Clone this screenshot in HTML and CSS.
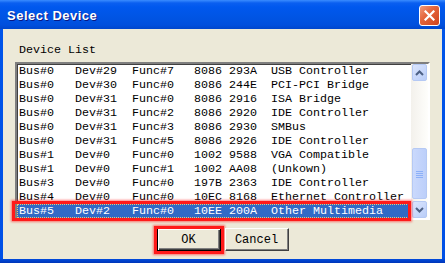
FILE: index.html
```html
<!DOCTYPE html>
<html>
<head>
    <meta charset="UTF-8">
    <title>Select Device</title>
    <link rel="stylesheet" href="styles.css">
</head>
<body>
    <div class="window">
        <div class="titlebar">
            <span class="title">Select Device</span>
            <div class="close">
                <svg width="11" height="11" viewBox="0 0 11 11"><path d="M1.5 1.5 L9.5 9.5 M9.5 1.5 L1.5 9.5" stroke="#fff" stroke-width="2.2" stroke-linecap="square"/></svg>
            </div>
        </div>
        <div class="client">
            <div class="label">Device List</div>
            <div class="list">
                <div class="rows">
                    <div class="row"><span>Bus#0</span><span>Dev#29</span><span>Func#7</span><span>8086</span><span>293A</span><span>USB Controller</span></div>
                    <div class="row"><span>Bus#0</span><span>Dev#30</span><span>Func#0</span><span>8086</span><span>244E</span><span>PCI-PCI Bridge</span></div>
                    <div class="row"><span>Bus#0</span><span>Dev#31</span><span>Func#0</span><span>8086</span><span>2916</span><span>ISA Bridge</span></div>
                    <div class="row"><span>Bus#0</span><span>Dev#31</span><span>Func#2</span><span>8086</span><span>2920</span><span>IDE Controller</span></div>
                    <div class="row"><span>Bus#0</span><span>Dev#31</span><span>Func#3</span><span>8086</span><span>2930</span><span>SMBus</span></div>
                    <div class="row"><span>Bus#0</span><span>Dev#31</span><span>Func#5</span><span>8086</span><span>2926</span><span>IDE Controller</span></div>
                    <div class="row"><span>Bus#1</span><span>Dev#0</span><span>Func#0</span><span>1002</span><span>9588</span><span>VGA Compatible</span></div>
                    <div class="row"><span>Bus#1</span><span>Dev#0</span><span>Func#1</span><span>1002</span><span>AA08</span><span>(Unkown)</span></div>
                    <div class="row"><span>Bus#3</span><span>Dev#0</span><span>Func#0</span><span>197B</span><span>2363</span><span>IDE Controller</span></div>
                    <div class="row"><span>Bus#4</span><span>Dev#0</span><span>Func#0</span><span>10EC</span><span>8168</span><span>Ethernet Controller</span></div>
                    <div class="row selected"><span>Bus#5</span><span>Dev#2</span><span>Func#0</span><span>10EE</span><span>200A</span><span>Other Multimedia</span><div class="mark mark-row"></div></div>
                </div>
                <div class="scrollbar">
                    <div class="sb-btn">
                        <svg width="9" height="6" viewBox="0 0 9 6"><path d="M1 5 L4.5 1.5 L8 5" fill="none" stroke="#4d6185" stroke-width="2"/></svg>
                    </div>
                    <div class="track">
                        <div class="thumb">
                            <svg width="8" height="8" viewBox="0 0 8 8"><path d="M0 1.5h7M0 3.5h7M0 5.5h7M0 7.5h7" stroke="#8cb0f8" stroke-width="1"/></svg>
                        </div>
                    </div>
                    <div class="sb-btn">
                        <svg width="9" height="6" viewBox="0 0 9 6"><path d="M1 1 L4.5 4.5 L8 1" fill="none" stroke="#4d6185" stroke-width="2"/></svg>
                    </div>
                </div>
            </div>
            <div class="buttons">
                <div class="btn default">OK<div class="mark mark-btn"></div></div>
                <div class="btn">Cancel</div>
            </div>
        </div>
    </div>
</body>
</html>
```
FILE: styles.css
```css
body{
    margin:0;
    background:#ece9d8;
    overflow:hidden;
}
.window{
    width:445px;
    height:263px;
    display:flex;
    flex-direction:column;
    background:linear-gradient(to bottom,#0055ea 0,#0050e6 258px,#0036b8 263px);
}
.titlebar{
    height:29px;
    display:flex;
    align-items:center;
    justify-content:space-between;
    padding:0 5px 0 7px;
    background:linear-gradient(to bottom,#3a8cff 0,#0a5ff0 3px,#0058ee 7px,#0054e3 18px,#004fdd 25px,#0046cc 29px);
}
.title{
    font-family:"Liberation Sans",Arial,sans-serif;
    font-weight:bold;
    font-size:13px;
    letter-spacing:0.5px;
    color:#fff;
    text-shadow:1px 1px #0a1883;
    padding-top:2px;
}
.close{
    width:19px;
    height:19px;
    border:1px solid #fff;
    border-radius:3px;
    background:linear-gradient(135deg,#f09a7c 0,#e5663d 40%,#d0431c 100%);
    display:flex;
    align-items:center;
    justify-content:center;
    margin-top:1px;
}
.client{
    flex:1;
    margin:0 3px 4px;
    background:#ece9d8;
    display:flex;
    flex-direction:column;
    padding-top:14px;
    font-family:"Liberation Mono","Courier New",monospace;
    font-size:11.67px;
    color:#000;
}
.label{
    line-height:14px;
    margin-left:16px;
}
.list{
    position:relative;
    margin:5px 0 0 12px;
    width:411px;
    height:154px;
    display:flex;
    border-style:solid;
    border-width:2px;
    border-color:#7f7f7f #fff #fff #7f7f7f;
    box-shadow:inset 1px 1px #404040;
    background:#fff;
}
.rows{
    flex:1;
}
.row{
    position:relative;
    display:grid;
    grid-template-columns:56px 57px 62px 35px 42px auto;
    height:14px;
    line-height:14px;
    padding-left:2px;
    white-space:pre;
}
.row.selected{
    background:#316ac5;
    color:#fff;
    outline:1px dotted #e8c878;
    outline-offset:-1px;
}
.mark{
    position:absolute;
    border:3px solid #ff1a1a;
    box-shadow:0 0 2px 1px rgba(255,40,40,.6);
    pointer-events:none;
}
.mark-row{
    left:-5px;
    right:0;
    top:-3px;
    bottom:-3px;
}
.mark-btn{
    left:-4px;
    right:-4px;
    top:-3px;
    bottom:-4px;
}
.scrollbar{
    width:17px;
    display:flex;
    flex-direction:column;
    background:linear-gradient(to right,#f3f1ec,#fefefb);
}
.sb-btn{
    height:15px;
    margin:0 1px;
    border:1px solid #b5c9f4;
    border-radius:2px;
    background:linear-gradient(135deg,#dbe5fd,#b9cdf8);
    display:flex;
    align-items:center;
    justify-content:center;
}
.track{
    flex:1;
    display:flex;
    flex-direction:column;
    justify-content:flex-end;
    padding-bottom:2px;
}
.thumb{
    height:49px;
    margin:0 1px;
    border:1px solid #b5c9f4;
    border-radius:2px;
    background:linear-gradient(to right,#cad9fc,#bccffa);
    display:flex;
    align-items:center;
    justify-content:center;
}
.buttons{
    display:flex;
    justify-content:center;
    gap:4px;
    margin-top:8px;
}
.btn{
    position:relative;
    width:64px;
    height:23px;
    box-sizing:border-box;
    display:flex;
    align-items:center;
    justify-content:center;
    background:#ece9d8;
    border-style:solid;
    border-width:1px;
    border-color:#fff #404040 #404040 #fff;
    box-shadow:inset -1px -1px #808080;
    font-size:12px;
}
.btn.default{
    border:1px solid #000;
    box-shadow:inset 1px 1px #fff,inset -1px -1px #404040,inset -2px -2px #808080;
}
```
